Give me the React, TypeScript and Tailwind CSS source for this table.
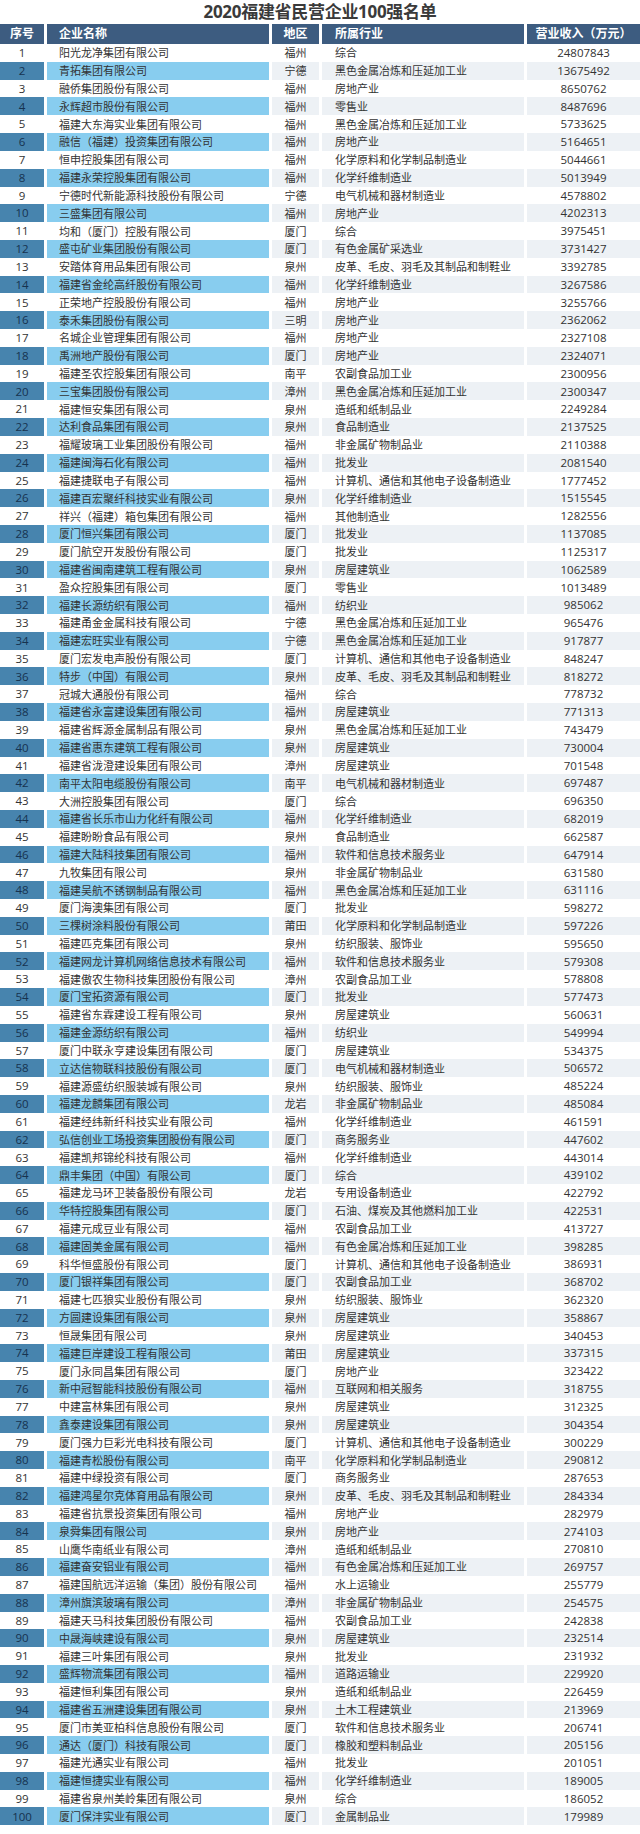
import React from "react";

const raw = `阳光龙净集团有限公司|福州|综合|24807843
青拓集团有限公司|宁德|黑色金属冶炼和压延加工业|13675492
融侨集团股份有限公司|福州|房地产业|8650762
永辉超市股份有限公司|福州|零售业|8487696
福建大东海实业集团有限公司|福州|黑色金属冶炼和压延加工业|5733625
融信（福建）投资集团有限公司|福州|房地产业|5164651
恒申控股集团有限公司|福州|化学原料和化学制品制造业|5044661
福建永荣控股集团有限公司|福州|化学纤维制造业|5013949
宁德时代新能源科技股份有限公司|宁德|电气机械和器材制造业|4578802
三盛集团有限公司|福州|房地产业|4202313
均和（厦门）控股有限公司|厦门|综合|3975451
盛屯矿业集团股份有限公司|厦门|有色金属矿采选业|3731427
安踏体育用品集团有限公司|泉州|皮革、毛皮、羽毛及其制品和制鞋业|3392785
福建省金纶高纤股份有限公司|福州|化学纤维制造业|3267586
正荣地产控股股份有限公司|福州|房地产业|3255766
泰禾集团股份有限公司|三明|房地产业|2362062
名城企业管理集团有限公司|福州|房地产业|2327108
禹洲地产股份有限公司|厦门|房地产业|2324071
福建圣农控股集团有限公司|南平|农副食品加工业|2300956
三宝集团股份有限公司|漳州|黑色金属冶炼和压延加工业|2300347
福建恒安集团有限公司|泉州|造纸和纸制品业|2249284
达利食品集团有限公司|泉州|食品制造业|2137525
福耀玻璃工业集团股份有限公司|福州|非金属矿物制品业|2110388
福建闽海石化有限公司|福州|批发业|2081540
福建捷联电子有限公司|福州|计算机、通信和其他电子设备制造业|1777452
福建百宏聚纤科技实业有限公司|泉州|化学纤维制造业|1515545
祥兴（福建）箱包集团有限公司|福州|其他制造业|1282556
厦门恒兴集团有限公司|厦门|批发业|1137085
厦门航空开发股份有限公司|厦门|批发业|1125317
福建省闽南建筑工程有限公司|泉州|房屋建筑业|1062589
盈众控股集团有限公司|厦门|零售业|1013489
福建长源纺织有限公司|福州|纺织业|985062
福建甬金金属科技有限公司|宁德|黑色金属冶炼和压延加工业|965476
福建宏旺实业有限公司|宁德|黑色金属冶炼和压延加工业|917877
厦门宏发电声股份有限公司|厦门|计算机、通信和其他电子设备制造业|848247
特步（中国）有限公司|泉州|皮革、毛皮、羽毛及其制品和制鞋业|818272
冠城大通股份有限公司|福州|综合|778732
福建省永富建设集团有限公司|福州|房屋建筑业|771313
福建省辉源金属制品有限公司|泉州|黑色金属冶炼和压延加工业|743479
福建省惠东建筑工程有限公司|泉州|房屋建筑业|730004
福建省泷澄建设集团有限公司|漳州|房屋建筑业|701548
南平太阳电缆股份有限公司|南平|电气机械和器材制造业|697487
大洲控股集团有限公司|厦门|综合|696350
福建省长乐市山力化纤有限公司|福州|化学纤维制造业|682019
福建盼盼食品有限公司|泉州|食品制造业|662587
福建大陆科技集团有限公司|福州|软件和信息技术服务业|647914
九牧集团有限公司|泉州|非金属矿物制品业|631580
福建吴航不锈钢制品有限公司|福州|黑色金属冶炼和压延加工业|631116
厦门海澳集团有限公司|厦门|批发业|598272
三棵树涂料股份有限公司|莆田|化学原料和化学制品制造业|597226
福建匹克集团有限公司|泉州|纺织服装、服饰业|595650
福建网龙计算机网络信息技术有限公司|福州|软件和信息技术服务业|579308
福建傲农生物科技集团股份有限公司|漳州|农副食品加工业|578808
厦门宝拓资源有限公司|厦门|批发业|577473
福建省东霖建设工程有限公司|泉州|房屋建筑业|560631
福建金源纺织有限公司|福州|纺织业|549994
厦门中联永亨建设集团有限公司|厦门|房屋建筑业|534375
立达信物联科技股份有限公司|厦门|电气机械和器材制造业|506572
福建源盛纺织服装城有限公司|泉州|纺织服装、服饰业|485224
福建龙麟集团有限公司|龙岩|非金属矿物制品业|485084
福建经纬新纤科技实业有限公司|福州|化学纤维制造业|461591
弘信创业工场投资集团股份有限公司|厦门|商务服务业|447602
福建凯邦锦纶科技有限公司|福州|化学纤维制造业|443014
鼎丰集团（中国）有限公司|厦门|综合|439102
福建龙马环卫装备股份有限公司|龙岩|专用设备制造业|422792
华特控股集团有限公司|厦门|石油、煤炭及其他燃料加工业|422531
福建元成豆业有限公司|福州|农副食品加工业|413727
福建固美金属有限公司|福州|有色金属冶炼和压延加工业|398285
科华恒盛股份有限公司|厦门|计算机、通信和其他电子设备制造业|386931
厦门银祥集团有限公司|厦门|农副食品加工业|368702
福建七匹狼实业股份有限公司|泉州|纺织服装、服饰业|362320
方圆建设集团有限公司|泉州|房屋建筑业|358867
恒晟集团有限公司|泉州|房屋建筑业|340453
福建巨岸建设工程有限公司|莆田|房屋建筑业|337315
厦门永同昌集团有限公司|厦门|房地产业|323422
新中冠智能科技股份有限公司|福州|互联网和相关服务|318755
中建富林集团有限公司|泉州|房屋建筑业|312325
鑫泰建设集团有限公司|泉州|房屋建筑业|304354
厦门强力巨彩光电科技有限公司|厦门|计算机、通信和其他电子设备制造业|300229
福建青松股份有限公司|南平|化学原料和化学制品制造业|290812
福建中绿投资有限公司|厦门|商务服务业|287653
福建鸿星尔克体育用品有限公司|泉州|皮革、毛皮、羽毛及其制品和制鞋业|284334
福建省抗景投资集团有限公司|福州|房地产业|282979
泉舜集团有限公司|泉州|房地产业|274103
山鹰华南纸业有限公司|漳州|造纸和纸制品业|270810
福建奋安铝业有限公司|福州|有色金属冶炼和压延加工业|269757
福建国航远洋运输（集团）股份有限公司|福州|水上运输业|255779
漳州旗滨玻璃有限公司|漳州|非金属矿物制品业|254575
福建天马科技集团股份有限公司|福州|农副食品加工业|242838
中晟海峡建设有限公司|泉州|房屋建筑业|232514
福建三叶集团有限公司|泉州|批发业|231932
盛辉物流集团有限公司|福州|道路运输业|229920
福建恒利集团有限公司|泉州|造纸和纸制品业|226459
福建省五洲建设集团有限公司|泉州|土木工程建筑业|213969
厦门市美亚柏科信息股份有限公司|厦门|软件和信息技术服务业|206741
通达（厦门）科技有限公司|厦门|橡胶和塑料制品业|205156
福建光通实业有限公司|福州|批发业|201051
福建恒捷实业有限公司|福州|化学纤维制造业|189005
福建省泉州美岭集团有限公司|泉州|综合|186052
厦门保沣实业有限公司|厦门|金属制品业|179989`;

const rows = raw.split("\n").map((l) => l.split("|"));

const font = {
  fontFamily: '"Open Sans", "Noto Sans CJK SC", sans-serif',
};

export default function App() {
  return (
    <div className="w-[640px] h-[1834px] bg-white text-[#333333]" style={font}>
      <div className="h-[24px] flex items-center justify-center text-[17px] font-bold text-[#3a3a3a] tracking-[-0.3px]">
        2020福建省民营企业100强名单
      </div>
      <div className="grid grid-cols-[44px_222px_47px_202px_113px] gap-x-[3px] h-[20px] text-[12px] font-bold text-white">
        <div className="bg-[#3d5c80] flex items-center justify-center">序号</div>
        <div className="bg-[#3d5c80] flex items-center pl-[12px]">企业名称</div>
        <div className="bg-[#3d5c80] flex items-center justify-center">地区</div>
        <div className="bg-[#3d5c80] flex items-center pl-[13px]">所属行业</div>
        <div className="bg-[#3d5c80] flex items-center justify-center">营业收入（万元）</div>
      </div>
      {rows.map((r, i) => {
        const even = i % 2 === 1;
        return (
          <div
            key={i}
            className="grid grid-cols-[44px_222px_47px_202px_113px] gap-x-[3px] h-[17.82px] text-[11px] leading-none"
          >
            <div
              className={
                even
                  ? "bg-[#4784ae] text-[#16324f] flex items-center justify-center text-[11.5px]"
                  : "flex items-center justify-center text-[11.5px]"
              }
            >
              {i + 1}
            </div>
            <div className={even ? "bg-[#88cdef] flex items-center pl-[12px] whitespace-nowrap" : "flex items-center pl-[12px] whitespace-nowrap"}>
              {r[0]}
            </div>
            <div className={even ? "bg-[#edf1f5] flex items-center justify-center" : "flex items-center justify-center"}>
              {r[1]}
            </div>
            <div className={even ? "bg-[#edf1f5] flex items-center pl-[13px] whitespace-nowrap" : "flex items-center pl-[13px] whitespace-nowrap"}>
              {r[2]}
            </div>
            <div className={even ? "bg-[#edf1f5] flex items-center justify-center text-[11.5px]" : "flex items-center justify-center text-[11.5px]"}>
              {r[3]}
            </div>
          </div>
        );
      })}
    </div>
  );
}
